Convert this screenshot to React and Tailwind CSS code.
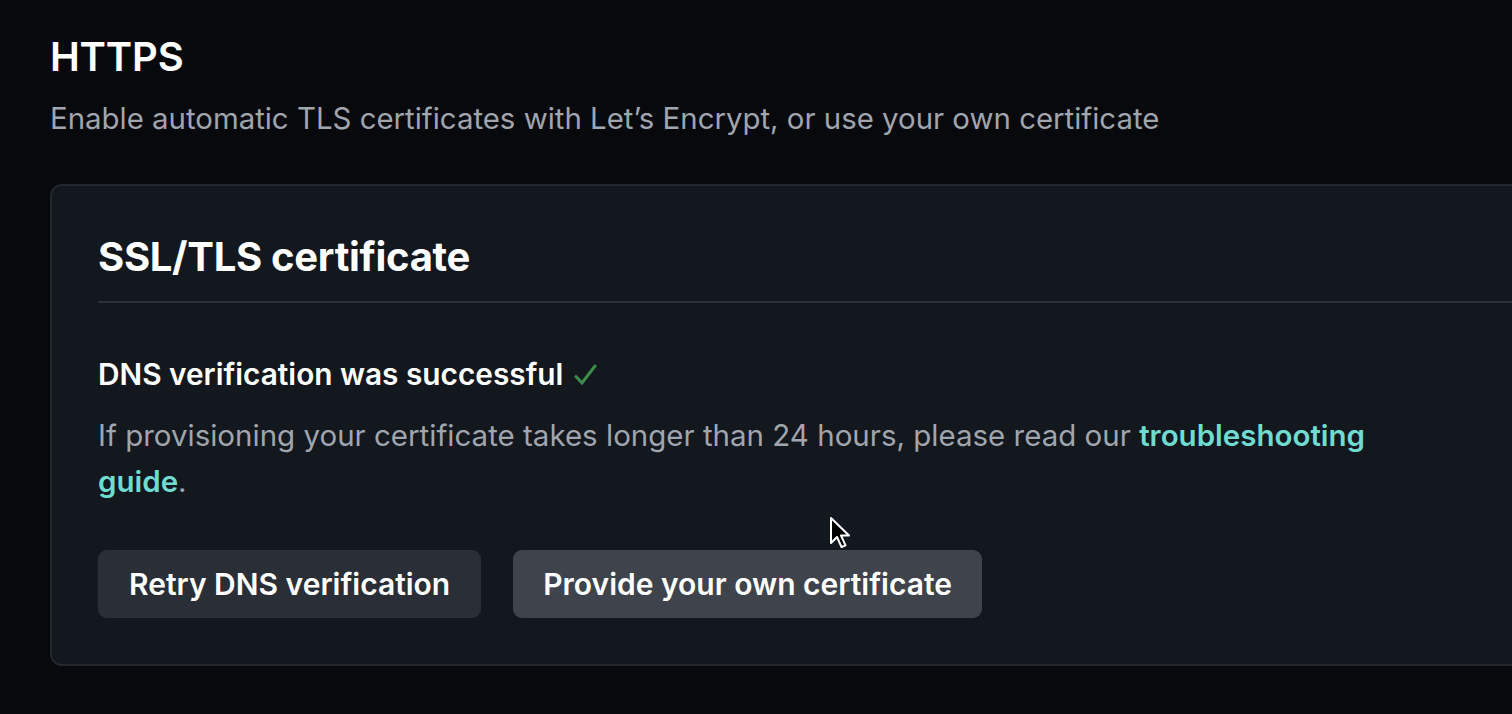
import React from 'react';

function Cursor() {
  return (
    <svg
      className="absolute left-[829px] top-[516px]"
      width="24"
      height="36"
      viewBox="0 0 24 36"
      aria-hidden="true"
    >
      <path
        d="M2 2 L2 27 L8 21 L12.5 31 L16.5 29.3 L12 19.5 L20 19.5 Z"
        fill="#000"
        stroke="#fff"
        strokeWidth="2"
        strokeLinejoin="round"
      />
    </svg>
  );
}

function Check() {
  return (
    <svg
      className="ml-[10px] inline-block align-[-2px]"
      width="24"
      height="24"
      viewBox="0 0 24 24"
      aria-hidden="true"
    >
      <path d="M3 13.5 L9 20 L22 3" fill="none" stroke="#3d8c4c" strokeWidth="3" strokeLinecap="round" />
    </svg>
  );
}

export default function App() {
  return (
    <div
      className="relative h-[714px] w-[1512px] overflow-hidden bg-[#07090d] text-white"
      style={{ fontFamily: 'Inter, "Liberation Sans", sans-serif' }}
    >
      <div className="flex flex-col pl-[50px] pt-[33px]">
        <h1 className="text-[40px] font-semibold leading-[48px] tracking-[-0.2px]">HTTPS</h1>
        <p className="mt-[20px] text-[29.4px] leading-[36px] text-[#a1a5ad]">
          Enable automatic TLS certificates with Let’s Encrypt, or use your own certificate
        </p>

        <section className="mt-[47px] w-[1500px] rounded-[12px] border-2 border-[#22262d] bg-[#13171e] pl-[46px] pb-[46px]">
          <h2 className="mt-[47px] text-[40px] font-bold leading-[48px] tracking-[-0.3px]">
            SSL/TLS certificate
          </h2>
          <div className="mt-[20px] h-[2px] bg-[#2a2e35]" />

          <p className="mt-[53px] text-[29.8px] font-semibold leading-[36px]">
            DNS verification was successful
            <Check />
          </p>
          <div className="mt-[20px] flex flex-col text-[29.5px] leading-[46px] text-[#a1a5ad]">
            <p>
              If provisioning your certificate takes longer than 24 hours, please read our{' '}
              <a className="font-semibold text-[#6fdcd2]">troubleshooting</a>
            </p>
            <p>
              <a className="font-semibold text-[#6fdcd2]">guide</a>.
            </p>
          </div>

          <div className="mt-[46px] flex gap-[32px]">
            <button
              type="button"
              className="h-[68px] rounded-[9px] bg-[#2a2e36] px-[31px] text-[30px] font-semibold text-white"
            >
              Retry DNS verification
            </button>
            <button
              type="button"
              className="h-[68px] rounded-[9px] bg-[#3f434b] px-[30px] text-[30px] font-semibold text-white"
            >
              Provide your own certificate
            </button>
          </div>
        </section>
      </div>
      <Cursor />
    </div>
  );
}
